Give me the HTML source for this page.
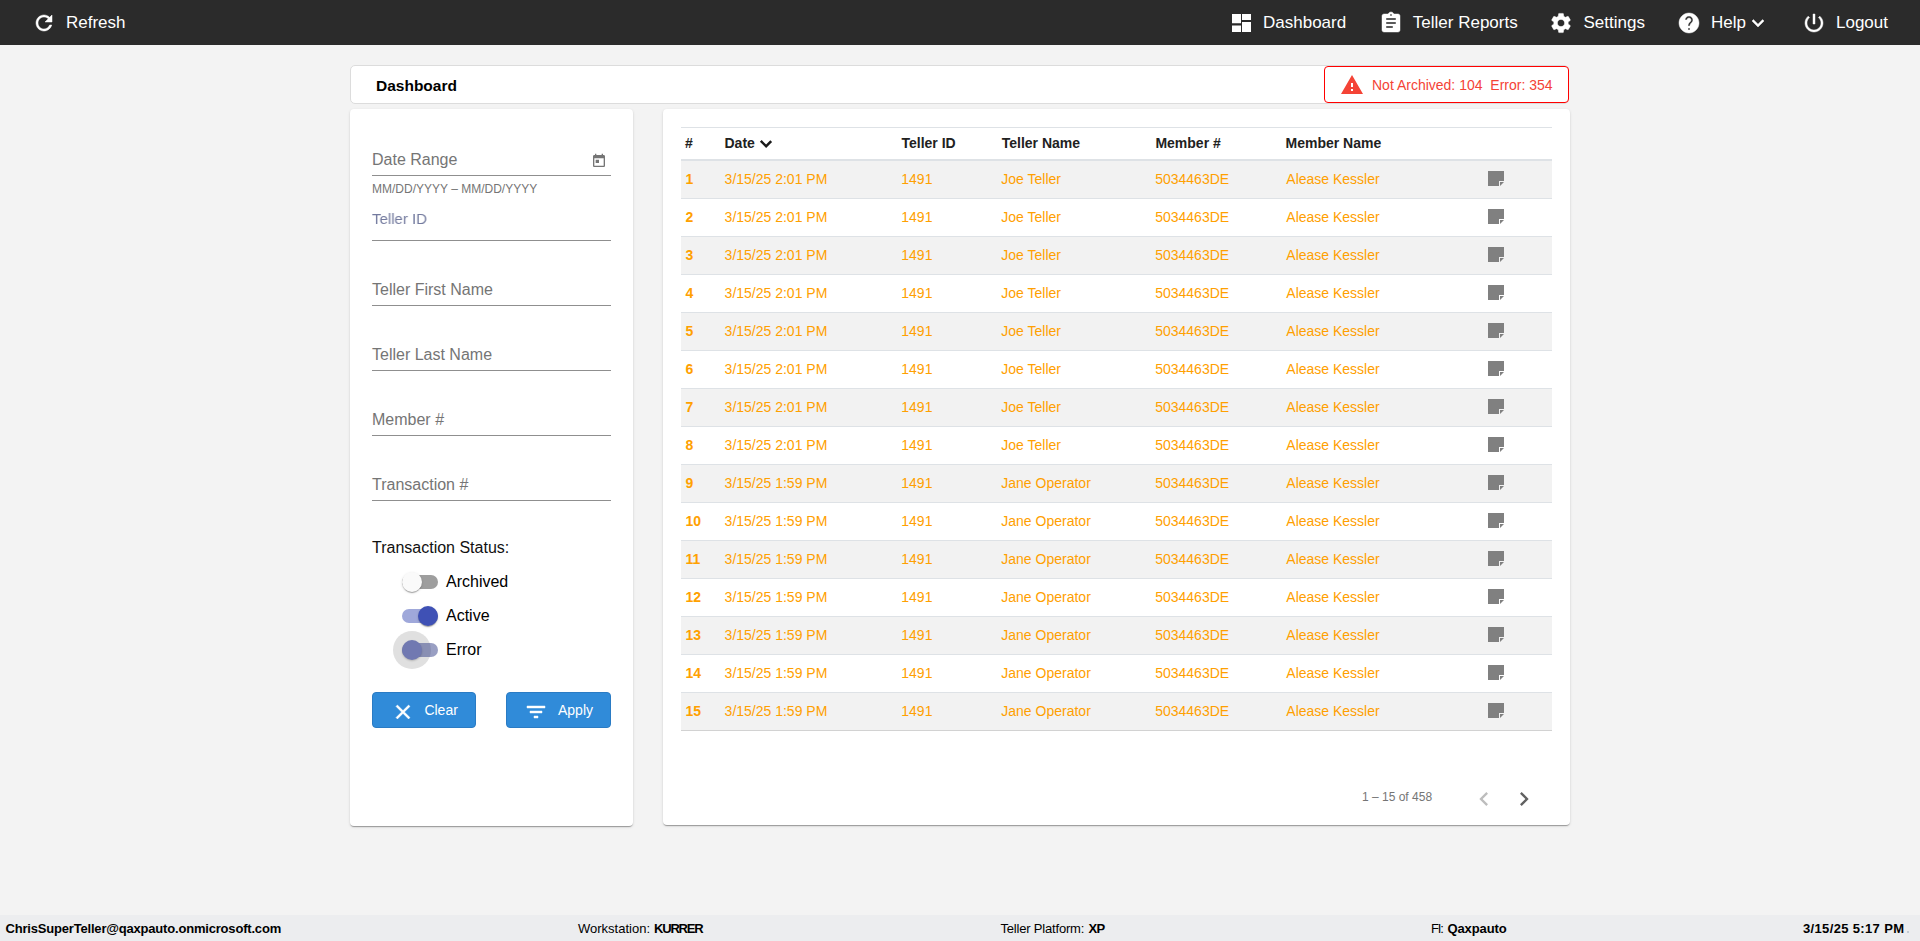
<!DOCTYPE html>
<html><head><meta charset="utf-8"><title>Dashboard</title>
<style>
html,body{margin:0;padding:0;}
body{width:1920px;height:941px;overflow:hidden;background:#f3f3f3;position:relative;font-family:"Liberation Sans",sans-serif;color:#212121;}
.t{position:absolute;white-space:nowrap;line-height:1;}
.ab{position:absolute;}
svg{position:absolute;display:block;}
.hdr{position:absolute;left:0;top:0;width:1920px;height:45px;background:#2b2b2b;}
.ht{color:#fff;font-size:17px;}
.card{position:absolute;background:#fff;border-radius:4px;box-shadow:0 2px 1px -1px rgba(0,0,0,.2),0 1px 1px 0 rgba(0,0,0,.14),0 1px 3px 0 rgba(0,0,0,.12);}
.lbl{color:#757575;font-size:16px;}
.ul{position:absolute;left:372px;width:239px;height:1px;background:#8f8f8f;}
.row{position:absolute;left:681px;width:871px;height:37px;border-bottom:1px solid #dee2e6;}
.row.s{background:#f2f2f2;}
.c{position:absolute;top:11px;font-size:14px;line-height:1;color:#ffa000;white-space:nowrap;}
.c.b{font-weight:bold;}
.th{position:absolute;font-size:14px;font-weight:bold;line-height:1;color:#212121;white-space:nowrap;}
.note{position:absolute;left:807px;top:10px;width:16px;height:15px;}
.ft{position:absolute;top:921.5px;font-size:13px;line-height:1;white-space:nowrap;color:#000;}
</style></head><body>

<div class="hdr"></div>
<svg style="left:32px;top:11px" width="24" height="24" viewBox="0 0 24 24"><path fill="#fff" stroke="#fff" stroke-width=".5" d="M17.65 6.35C16.2 4.9 14.21 4 12 4c-4.42 0-7.99 3.58-7.99 8s3.57 8 7.99 8c3.73 0 6.84-2.55 7.73-6h-2.08c-.82 2.33-3.04 4-5.65 4-3.31 0-6-2.69-6-6s2.69-6 6-6c1.66 0 3.14.69 4.22 1.78L13 11h7V4l-2.35 2.35z"/></svg>
<div class="t ht" style="left:66px;top:13.6px">Refresh</div>
<svg style="left:1229px;top:11px" width="24" height="24" viewBox="0 0 24 24"><path fill="#fff" d="M3 3H12V12.3H3Z M3 14.6H12V21.1H3Z M13 3H22V8.9H13Z M13 10.9H22V21.1H13Z"/></svg>
<div class="t ht" style="left:1263px;top:13.6px">Dashboard</div>
<svg style="left:1379px;top:11px" width="24" height="24" viewBox="0 0 24 24"><path fill="#fff" stroke="#fff" stroke-width=".45" d="M19 3h-4.18C14.4 1.84 13.3 1 12 1c-1.3 0-2.4.84-2.82 2H5c-1.1 0-2 .9-2 2v14c0 1.1.9 2 2 2h14c1.1 0 2-.9 2-2V5c0-1.1-.9-2-2-2zm-7 0c.55 0 1 .45 1 1s-.45 1-1 1-1-.45-1-1 .45-1 1-1zm2 14H7v-2h7v2zm3-4H7v-2h10v2zm0-4H7V7h10v2z"/></svg>
<div class="t ht" style="left:1412.8px;top:13.6px">Teller Reports</div>
<svg style="left:1549px;top:11px" width="24" height="24" viewBox="0 0 24 24"><path fill="#fff" stroke="#fff" stroke-width=".45" d="M19.14 12.94c.04-.3.06-.61.06-.94 0-.32-.02-.64-.07-.94l2.03-1.58c.18-.14.23-.41.12-.61l-1.92-3.32c-.12-.22-.37-.29-.59-.22l-2.39.96c-.5-.38-1.03-.7-1.62-.94l-.36-2.54c-.04-.24-.24-.41-.48-.41h-3.84c-.24 0-.43.17-.47.41l-.36 2.54c-.59.24-1.13.57-1.62.94l-2.39-.96c-.22-.08-.47 0-.59.22L2.74 8.87c-.12.21-.08.47.12.61l2.03 1.58c-.05.3-.09.63-.09.94s.02.64.07.94l-2.03 1.58c-.18.14-.23.41-.12.61l1.92 3.32c.12.22.37.29.59.22l2.39-.96c.5.38 1.03.7 1.62.94l.36 2.54c.05.24.24.41.48.41h3.84c.24 0 .44-.17.47-.41l.36-2.54c.59-.24 1.13-.56 1.62-.94l2.39.96c.22.08.47 0 .59-.22l1.92-3.32c.12-.22.07-.47-.12-.61l-2.01-1.58zM12 15.6c-1.98 0-3.6-1.62-3.6-3.6s1.62-3.6 3.6-3.6 3.6 1.62 3.6 3.6-1.62 3.6-3.6 3.6z"/></svg>
<div class="t ht" style="left:1583.5px;top:13.6px">Settings</div>
<svg style="left:1677px;top:11px" width="24" height="24" viewBox="0 0 24 24"><path fill="#fff" stroke="#fff" stroke-width=".45" d="M12 2C6.48 2 2 6.48 2 12s4.48 10 10 10 10-4.48 10-10S17.52 2 12 2zm1 17h-2v-2h2v2zm2.07-7.75l-.9.92C13.45 12.9 13 13.5 13 15h-2v-.5c0-1.1.45-2.1 1.17-2.83l1.24-1.26c.37-.36.59-.86.59-1.41 0-1.1-.9-2-2-2s-2 .9-2 2H8c0-2.21 1.79-4 4-4s4 1.79 4 4c0 .88-.36 1.68-.93 2.25z"/></svg>
<div class="t ht" style="left:1711px;top:13.6px">Help</div>
<svg style="left:1746px;top:11px" width="24" height="24" viewBox="0 0 24 24"><path fill="#fff" stroke="#fff" stroke-width=".45" d="M16.59 8.59L12 13.17 7.41 8.59 6 10l6 6 6-6z"/></svg>
<svg style="left:1802px;top:11px" width="24" height="24" viewBox="0 0 24 24"><path fill="#fff" stroke="#fff" stroke-width=".45" d="M13 3h-2v10h2V3zm4.83 2.17l-1.42 1.42C17.99 7.86 19 9.81 19 12c0 3.87-3.13 7-7 7s-7-3.13-7-7c0-2.19 1.01-4.14 2.58-5.42L6.17 5.17C4.23 6.82 3 9.26 3 12c0 4.97 4.03 9 9 9s9-4.03 9-9c0-2.74-1.23-5.18-3.17-6.83z"/></svg>
<div class="t ht" style="left:1836px;top:13.6px">Logout</div>
<div class="ab" style="left:350px;top:65px;width:1217px;height:37px;border:1px solid #dcdcdc;border-radius:5px;background:#fff"></div>
<div class="t" style="left:376px;top:78px;font-size:15.5px;font-weight:bold;color:#000">Dashboard</div>
<div class="ab" style="left:1324px;top:66px;width:243px;height:35px;border:1px solid #ff0000;border-radius:4px;background:#fff"></div>
<svg style="left:1340px;top:73px" width="24" height="24" viewBox="0 0 24 24"><path fill="#f44336" d="M1 21h22L12 2 1 21zm12-3h-2v-2h2v2zm0-4h-2v-4h2v4z"/></svg>
<div class="t" style="left:1372px;top:78px;font-size:14px;color:#f44336">Not Archived: 104&nbsp;&nbsp;Error: 354</div>
<div class="card" style="left:350px;top:109px;width:283px;height:717px;"></div>
<div class="t lbl" style="left:372px;top:152.2px">Date Range</div>
<svg style="left:591px;top:153px" width="16" height="16" viewBox="0 0 24 24"><path fill="#757575" d="M19 3h-1V1h-2v2H8V1H6v2H5c-1.11 0-1.99.9-1.99 2L3 19c0 1.1.89 2 2 2h14c1.1 0 2-.9 2-2V5c0-1.1-.9-2-2-2zm0 16H5V8h14v11zM7 10h5v5H7z"/></svg>
<div class="ul" style="top:175px"></div>
<div class="t" style="left:372px;top:182.7px;font-size:12px;color:#757575">MM/DD/YYYY – MM/DD/YYYY</div>
<div class="t" style="left:372px;top:211.3px;font-size:15.4px;color:#737a9e;transform:scaleX(.975);transform-origin:0 0;will-change:transform">Teller ID</div>
<div class="ul" style="top:240px"></div>
<div class="t lbl" style="left:372px;top:281.9px">Teller First Name</div>
<div class="ul" style="top:305px"></div>
<div class="t lbl" style="left:372px;top:346.9px">Teller Last Name</div>
<div class="ul" style="top:370px"></div>
<div class="t lbl" style="left:372px;top:411.9px">Member #</div>
<div class="ul" style="top:435px"></div>
<div class="t lbl" style="left:372px;top:476.9px">Transaction #</div>
<div class="ul" style="top:500px"></div>
<div class="t" style="left:372px;top:539.6px;font-size:16px;color:#111">Transaction Status:</div>
<div class="ab" style="left:402px;top:575px;width:36px;height:14px;border-radius:7px;background:#9e9e9e"></div>
<div class="ab" style="left:402px;top:572px;width:20px;height:20px;border-radius:50%;background:#fafafa;box-shadow:0 2px 1px -1px rgba(0,0,0,.2),0 1px 1px 0 rgba(0,0,0,.14),0 1px 3px 0 rgba(0,0,0,.12)"></div>
<div class="ab" style="left:402px;top:609px;width:36px;height:14px;border-radius:7px;background:#9fa8da"></div>
<div class="ab" style="left:418px;top:606px;width:20px;height:20px;border-radius:50%;background:#3f51b5;box-shadow:0 2px 1px -1px rgba(0,0,0,.2),0 1px 1px 0 rgba(0,0,0,.14),0 1px 3px 0 rgba(0,0,0,.12)"></div>
<div class="ab" style="left:393px;top:631px;width:38px;height:38px;border-radius:50%;background:#e0e0e0"></div>
<div class="ab" style="left:402px;top:643px;width:36px;height:14px;border-radius:7px;background:rgba(46,59,133,.49)"></div>
<div class="ab" style="left:402px;top:640px;width:20px;height:20px;border-radius:50%;background:#7179b1;box-shadow:0 1px 2px rgba(0,0,0,.2)"></div>
<div class="t" style="left:446px;top:573.5px;font-size:16px;color:#000">Archived</div>
<div class="t" style="left:446px;top:607.5px;font-size:16px;color:#000">Active</div>
<div class="t" style="left:446px;top:641.5px;font-size:16px;color:#000">Error</div>
<div class="ab" style="left:372px;top:692px;width:102px;height:34px;border:1px solid #2a7bc4;border-radius:4px;background:#308bd9"></div>
<svg style="left:390.8px;top:700px" width="24" height="24" viewBox="0 0 24 24"><path fill="#fff" stroke="#fff" stroke-width=".45" d="M19 6.41L17.59 5 12 10.59 6.41 5 5 6.41 10.59 12 5 17.59 6.41 19 12 13.41 17.59 19 19 17.59 13.41 12z"/></svg>
<div class="t" style="left:424.4px;top:703px;font-size:14px;color:#fff">Clear</div>
<div class="ab" style="left:506px;top:692px;width:103px;height:34px;border:1px solid #2a7bc4;border-radius:4px;background:#308bd9"></div>
<svg style="left:523.8px;top:700px" width="24" height="24" viewBox="0 0 24 24"><path fill="#fff" stroke="#fff" stroke-width=".45" d="M10 18h4v-2h-4v2zM3 6v2h18V6H3zm3 7h12v-2H6v2z"/></svg>
<div class="t" style="left:558px;top:703px;font-size:14px;color:#fff">Apply</div>
<div class="card" style="left:663px;top:109px;width:907px;height:716px;"></div>
<div class="ab" style="left:681px;top:127px;width:871px;height:1px;background:#dee2e6"></div>
<div class="ab" style="left:681px;top:159px;width:871px;height:2px;background:#dee2e6"></div>
<div class="th" style="left:685.0px;top:135.8px">#</div>
<div class="th" style="left:724.5px;top:135.8px">Date</div>
<div class="th" style="left:901.5px;top:135.8px">Teller ID</div>
<div class="th" style="left:1001.7px;top:135.8px">Teller Name</div>
<div class="th" style="left:1155.4px;top:135.8px">Member #</div>
<div class="th" style="left:1285.5px;top:135.8px">Member Name</div>
<svg style="left:755px;top:134px" width="25" height="20" viewBox="0 0 25 20"><path fill="#1a1a1a" d="M4.9 7.8L6.7 6.1 11.1 10.5 15.3 6.2 17.1 8 11.1 13.9Z"/></svg>
<div class="row s" style="top:161px">
<div class="c b" style="left:4.5px">1</div>
<div class="c" style="left:43.6px">3/15/25 2:01 PM</div>
<div class="c" style="left:220.3px">1491</div>
<div class="c" style="left:320.3px">Joe Teller</div>
<div class="c" style="left:474.2px">5034463DE</div>
<div class="c" style="left:605.3px">Alease Kessler</div>
<svg class="note" viewBox="0 0 16 15"><path fill="#808080" d="M0 0H16V10H11V15H0Z M12 11H16L12 15Z"/></svg>
</div>
<div class="row" style="top:199px">
<div class="c b" style="left:4.5px">2</div>
<div class="c" style="left:43.6px">3/15/25 2:01 PM</div>
<div class="c" style="left:220.3px">1491</div>
<div class="c" style="left:320.3px">Joe Teller</div>
<div class="c" style="left:474.2px">5034463DE</div>
<div class="c" style="left:605.3px">Alease Kessler</div>
<svg class="note" viewBox="0 0 16 15"><path fill="#808080" d="M0 0H16V10H11V15H0Z M12 11H16L12 15Z"/></svg>
</div>
<div class="row s" style="top:237px">
<div class="c b" style="left:4.5px">3</div>
<div class="c" style="left:43.6px">3/15/25 2:01 PM</div>
<div class="c" style="left:220.3px">1491</div>
<div class="c" style="left:320.3px">Joe Teller</div>
<div class="c" style="left:474.2px">5034463DE</div>
<div class="c" style="left:605.3px">Alease Kessler</div>
<svg class="note" viewBox="0 0 16 15"><path fill="#808080" d="M0 0H16V10H11V15H0Z M12 11H16L12 15Z"/></svg>
</div>
<div class="row" style="top:275px">
<div class="c b" style="left:4.5px">4</div>
<div class="c" style="left:43.6px">3/15/25 2:01 PM</div>
<div class="c" style="left:220.3px">1491</div>
<div class="c" style="left:320.3px">Joe Teller</div>
<div class="c" style="left:474.2px">5034463DE</div>
<div class="c" style="left:605.3px">Alease Kessler</div>
<svg class="note" viewBox="0 0 16 15"><path fill="#808080" d="M0 0H16V10H11V15H0Z M12 11H16L12 15Z"/></svg>
</div>
<div class="row s" style="top:313px">
<div class="c b" style="left:4.5px">5</div>
<div class="c" style="left:43.6px">3/15/25 2:01 PM</div>
<div class="c" style="left:220.3px">1491</div>
<div class="c" style="left:320.3px">Joe Teller</div>
<div class="c" style="left:474.2px">5034463DE</div>
<div class="c" style="left:605.3px">Alease Kessler</div>
<svg class="note" viewBox="0 0 16 15"><path fill="#808080" d="M0 0H16V10H11V15H0Z M12 11H16L12 15Z"/></svg>
</div>
<div class="row" style="top:351px">
<div class="c b" style="left:4.5px">6</div>
<div class="c" style="left:43.6px">3/15/25 2:01 PM</div>
<div class="c" style="left:220.3px">1491</div>
<div class="c" style="left:320.3px">Joe Teller</div>
<div class="c" style="left:474.2px">5034463DE</div>
<div class="c" style="left:605.3px">Alease Kessler</div>
<svg class="note" viewBox="0 0 16 15"><path fill="#808080" d="M0 0H16V10H11V15H0Z M12 11H16L12 15Z"/></svg>
</div>
<div class="row s" style="top:389px">
<div class="c b" style="left:4.5px">7</div>
<div class="c" style="left:43.6px">3/15/25 2:01 PM</div>
<div class="c" style="left:220.3px">1491</div>
<div class="c" style="left:320.3px">Joe Teller</div>
<div class="c" style="left:474.2px">5034463DE</div>
<div class="c" style="left:605.3px">Alease Kessler</div>
<svg class="note" viewBox="0 0 16 15"><path fill="#808080" d="M0 0H16V10H11V15H0Z M12 11H16L12 15Z"/></svg>
</div>
<div class="row" style="top:427px">
<div class="c b" style="left:4.5px">8</div>
<div class="c" style="left:43.6px">3/15/25 2:01 PM</div>
<div class="c" style="left:220.3px">1491</div>
<div class="c" style="left:320.3px">Joe Teller</div>
<div class="c" style="left:474.2px">5034463DE</div>
<div class="c" style="left:605.3px">Alease Kessler</div>
<svg class="note" viewBox="0 0 16 15"><path fill="#808080" d="M0 0H16V10H11V15H0Z M12 11H16L12 15Z"/></svg>
</div>
<div class="row s" style="top:465px">
<div class="c b" style="left:4.5px">9</div>
<div class="c" style="left:43.6px">3/15/25 1:59 PM</div>
<div class="c" style="left:220.3px">1491</div>
<div class="c" style="left:320.3px">Jane Operator</div>
<div class="c" style="left:474.2px">5034463DE</div>
<div class="c" style="left:605.3px">Alease Kessler</div>
<svg class="note" viewBox="0 0 16 15"><path fill="#808080" d="M0 0H16V10H11V15H0Z M12 11H16L12 15Z"/></svg>
</div>
<div class="row" style="top:503px">
<div class="c b" style="left:4.5px">10</div>
<div class="c" style="left:43.6px">3/15/25 1:59 PM</div>
<div class="c" style="left:220.3px">1491</div>
<div class="c" style="left:320.3px">Jane Operator</div>
<div class="c" style="left:474.2px">5034463DE</div>
<div class="c" style="left:605.3px">Alease Kessler</div>
<svg class="note" viewBox="0 0 16 15"><path fill="#808080" d="M0 0H16V10H11V15H0Z M12 11H16L12 15Z"/></svg>
</div>
<div class="row s" style="top:541px">
<div class="c b" style="left:4.5px">11</div>
<div class="c" style="left:43.6px">3/15/25 1:59 PM</div>
<div class="c" style="left:220.3px">1491</div>
<div class="c" style="left:320.3px">Jane Operator</div>
<div class="c" style="left:474.2px">5034463DE</div>
<div class="c" style="left:605.3px">Alease Kessler</div>
<svg class="note" viewBox="0 0 16 15"><path fill="#808080" d="M0 0H16V10H11V15H0Z M12 11H16L12 15Z"/></svg>
</div>
<div class="row" style="top:579px">
<div class="c b" style="left:4.5px">12</div>
<div class="c" style="left:43.6px">3/15/25 1:59 PM</div>
<div class="c" style="left:220.3px">1491</div>
<div class="c" style="left:320.3px">Jane Operator</div>
<div class="c" style="left:474.2px">5034463DE</div>
<div class="c" style="left:605.3px">Alease Kessler</div>
<svg class="note" viewBox="0 0 16 15"><path fill="#808080" d="M0 0H16V10H11V15H0Z M12 11H16L12 15Z"/></svg>
</div>
<div class="row s" style="top:617px">
<div class="c b" style="left:4.5px">13</div>
<div class="c" style="left:43.6px">3/15/25 1:59 PM</div>
<div class="c" style="left:220.3px">1491</div>
<div class="c" style="left:320.3px">Jane Operator</div>
<div class="c" style="left:474.2px">5034463DE</div>
<div class="c" style="left:605.3px">Alease Kessler</div>
<svg class="note" viewBox="0 0 16 15"><path fill="#808080" d="M0 0H16V10H11V15H0Z M12 11H16L12 15Z"/></svg>
</div>
<div class="row" style="top:655px">
<div class="c b" style="left:4.5px">14</div>
<div class="c" style="left:43.6px">3/15/25 1:59 PM</div>
<div class="c" style="left:220.3px">1491</div>
<div class="c" style="left:320.3px">Jane Operator</div>
<div class="c" style="left:474.2px">5034463DE</div>
<div class="c" style="left:605.3px">Alease Kessler</div>
<svg class="note" viewBox="0 0 16 15"><path fill="#808080" d="M0 0H16V10H11V15H0Z M12 11H16L12 15Z"/></svg>
</div>
<div class="row s" style="top:693px;border-bottom-color:#d2d2d2">
<div class="c b" style="left:4.5px">15</div>
<div class="c" style="left:43.6px">3/15/25 1:59 PM</div>
<div class="c" style="left:220.3px">1491</div>
<div class="c" style="left:320.3px">Jane Operator</div>
<div class="c" style="left:474.2px">5034463DE</div>
<div class="c" style="left:605.3px">Alease Kessler</div>
<svg class="note" viewBox="0 0 16 15"><path fill="#808080" d="M0 0H16V10H11V15H0Z M12 11H16L12 15Z"/></svg>
</div>
<div class="t" style="left:1362px;top:790.6px;font-size:12px;color:#757575">1 – 15 of 458</div>
<svg style="left:1470px;top:785px" width="28" height="28" viewBox="0 0 24 24"><path fill="#bdbdbd" d="M15.41 7.41L14 6l-6 6 6 6 1.41-1.41L10.83 12z"/></svg>
<svg style="left:1510px;top:785px" width="28" height="28" viewBox="0 0 24 24"><path fill="#616161" d="M10 6L8.59 7.41 13.17 12l-4.58 4.59L10 18l6-6z"/></svg>
<div class="ab" style="left:0;top:915px;width:1920px;height:26px;background:#ecedef"></div>
<div class="ft" style="left:5.5px;font-weight:bold;letter-spacing:-0.19px">ChrisSuperTeller@qaxpauto.onmicrosoft.com</div>
<div class="ft" style="left:578.0px;font-weight:normal;letter-spacing:0.00px">Workstation:</div>
<div class="ft" style="left:654.0px;font-weight:bold;letter-spacing:-1.20px">KURRER</div>
<div class="ft" style="left:1000.5px;font-weight:normal;letter-spacing:-0.19px">Teller Platform:</div>
<div class="ft" style="left:1088.5px;font-weight:bold;letter-spacing:-0.70px">XP</div>
<div class="ft" style="left:1431.0px;font-weight:normal;letter-spacing:-1.20px">FI:</div>
<div class="ft" style="left:1447.5px;font-weight:bold;letter-spacing:-0.11px">Qaxpauto</div>
<div class="ft" style="left:1803.0px;font-weight:bold;letter-spacing:0.35px">3/15/25 5:17 PM</div>
<div class="ab" style="left:1907px;top:931px;width:2px;height:2px;background:#a8b4c0;opacity:.6"></div>
</body></html>
